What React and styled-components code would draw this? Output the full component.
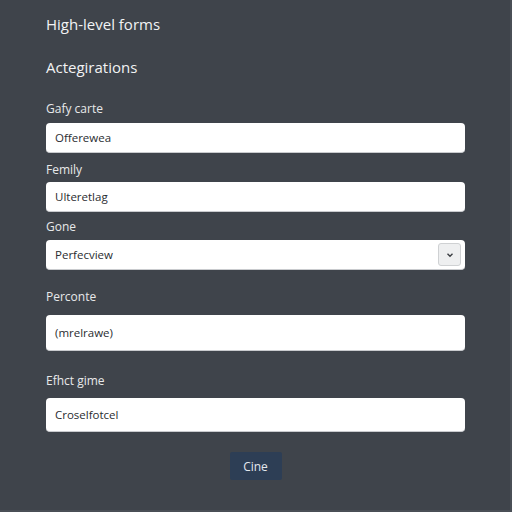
import React from "react";
import styled, { createGlobalStyle } from "styled-components";

const Global = createGlobalStyle`
  html, body { margin: 0; padding: 0; background: #3f444b; }
  body { font-family: "Open Sans", "Liberation Sans", sans-serif; }
  * { box-sizing: border-box; }
`;

const Page = styled.div`
  width: 512px;
  height: 512px;
  background: #3f444b;
  border-right: 2px solid #4a4f56;
  border-bottom: 2px solid #4a4f56;
  padding: 14px 45px 0 46px;
  display: flex;
  flex-direction: column;
`;

const Title = styled.h1`
  margin: 0;
  font-size: 15px;
  line-height: 20px;
  font-weight: 400;
  color: #f2f3f4;
`;

const Section = styled.h2`
  margin: 23px 0 0 0;
  font-size: 15px;
  line-height: 20px;
  font-weight: 400;
  color: #f2f3f4;
`;

const Field = styled.div`
  display: flex;
  flex-direction: column;
  margin-top: ${(p) => p.$top}px;
`;

const Label = styled.label`
  font-size: 12px;
  line-height: 16px;
  color: #e8e9ea;
  margin-bottom: ${(p) => p.$gap}px;
`;

const InputBox = styled.div`
  height: ${(p) => p.$h}px;
  background: #ffffff;
  border-radius: 4px;
  border-bottom: 1px solid #c9cbce;
  display: flex;
  align-items: center;
  justify-content: space-between;
  padding: 0 4px 0 9px;
  font-size: 11.5px;
  color: #2a2d31;
`;

const Chevron = styled.div`
  width: 23px;
  height: 23px;
  border: 1px solid #cfd1d3;
  border-radius: 3px;
  background: #eeeff0;
  display: flex;
  align-items: center;
  justify-content: center;
`;

const Footer = styled.div`
  display: flex;
  justify-content: center;
  margin-top: 20px;
`;

const Button = styled.button`
  width: 52px;
  height: 28px;
  border: none;
  border-radius: 2px;
  background: #2d3e55;
  color: #e4e8ee;
  font-family: inherit;
  font-size: 12px;
  padding: 0;
`;

const fields = [
  { label: "Gafy carte", value: "Offerewea", top: 24, gap: 6, h: 30 },
  { label: "Femily", value: "Ulteretlag", top: 9, gap: 4, h: 30 },
  { label: "Gone", value: "Perfecview", top: 7, gap: 5, h: 30, select: true },
  { label: "Perconte", value: "(mrelrawe)", top: 19, gap: 10, h: 36 },
  { label: "Efhct gime", value: "Croselfotcel", top: 22, gap: 9, h: 34 },
];

export default function App() {
  return (
    <>
      <Global />
      <Page>
        <Title>High-level forms</Title>
        <Section>Actegirations</Section>
        {fields.map((f) => (
          <Field key={f.label} $top={f.top}>
            <Label $gap={f.gap}>{f.label}</Label>
            <InputBox $h={f.h}>
              <span>{f.value}</span>
              {f.select && (
                <Chevron>
                  <svg width="8" height="6" viewBox="0 0 8 6">
                    <path d="M1.5 1.8 L4 4.2 L6.5 1.8" fill="none" stroke="#3a3d42" strokeWidth="1.4" />
                  </svg>
                </Chevron>
              )}
            </InputBox>
          </Field>
        ))}
        <Footer>
          <Button>Cine</Button>
        </Footer>
      </Page>
    </>
  );
}
